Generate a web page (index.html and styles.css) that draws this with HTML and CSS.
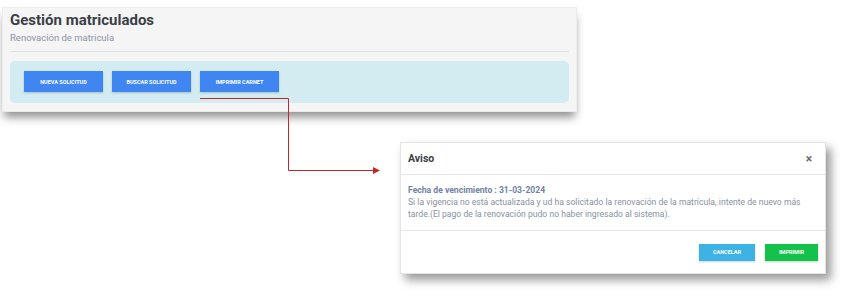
FILE: index.html
```html
<!DOCTYPE html>
<html lang="es">
<head>
    <meta charset="UTF-8">
    <meta name="viewport" content="width=device-width, initial-scale=1.0">
    <title>Gestión matriculados</title>
    <link rel="stylesheet" href="styles.css">
</head>
<body>

<div class="screen">
    <!-- Pantalla principal -->
    <div class="panel">
        <h1 class="panel-title">Gestión matriculados</h1>
        <p class="panel-subtitle">Renovación de matricula</p>
        <hr class="panel-divider">
        <div class="actions">
            <button class="btn btn-blue">Nueva solicitud</button>
            <button class="btn btn-blue">Buscar solicitud</button>
            <button class="btn btn-blue">Imprimir carnet</button>
        </div>
    </div>

    <!-- Flecha hacia el aviso -->
    <svg class="arrow" width="853" height="296" viewBox="0 0 853 296">
        <polyline points="200,98.5 288.5,98.5 288.5,170.5 374,170.5" fill="none" stroke="#c0282a" stroke-width="1"/>
        <polygon points="373,167 380,170.5 373,174" fill="#c0282a"/>
    </svg>

    <!-- Modal de aviso -->
    <div class="modal">
        <div class="modal-header">
            <span class="modal-title">Aviso</span>
            <span class="modal-close">&times;</span>
        </div>
        <div class="modal-body">
            <p class="modal-date">Fecha de vencimiento : 31-03-2024</p>
            <p class="modal-text">Si la vigencia no está actualizada y ud ha solicitado la renovación de la matrícula, intente de nuevo más tarde.(El pago de la renovación pudo no haber ingresado al sistema).</p>
        </div>
        <div class="modal-footer">
            <button class="btn btn-cyan">Cancelar</button>
            <button class="btn btn-green">Imprimir</button>
        </div>
    </div>
</div>

</body>
</html>
```

FILE: styles.css
```css
body {
    margin: 0;
    background: #ffffff;
    font-family: Roboto, "Liberation Sans", Arial, sans-serif;
}

.screen {
    position: relative;
    width: 853px;
    height: 296px;
    padding: 7px 0 0 2px;
    box-sizing: border-box;
}

.panel {
    width: 575px;
    height: 105px;
    box-sizing: border-box;
    padding: 4px 7px 0 7px;
    background-color: #f5f5f5;
    border: 1px solid #ececec;
    box-shadow: 0 7px 9px -2px rgba(0, 0, 0, 0.45);
}

.panel-title {
    margin: 0;
    font-size: 15px;
    font-weight: 700;
    color: #3b3f45;
    line-height: 17px;
}

.panel-subtitle {
    margin: 3px 0 0 0;
    font-size: 9.5px;
    color: #8b93a5;
    line-height: 12px;
}

.panel-divider {
    border: 0;
    border-top: 1px solid #e2e2e2;
    margin: 7px 0 0 0;
}

.actions {
    display: flex;
    gap: 9px;
    margin-top: 9px;
    height: 42px;
    box-sizing: border-box;
    padding: 10px 14px;
    background-color: #d3ecf2;
    border-radius: 5px;
}

.btn {
    border: 0;
    color: #ffffff;
    font-family: inherit;
    font-size: 5.5px;
    font-weight: 700;
    text-transform: uppercase;
    cursor: pointer;
    box-shadow: 0 1px 2px rgba(0, 0, 0, 0.2);
}

.btn-blue {
    width: 79px;
    height: 21px;
    background-color: #3f86f2;
}

.arrow {
    position: absolute;
    top: 0;
    left: 0;
    pointer-events: none;
}

.modal {
    width: 426px;
    height: 132px;
    margin: 30px 0 0 398px;
    box-sizing: border-box;
    background-color: #ffffff;
    border: 1px solid #e4e4e4;
    box-shadow: 5px 6px 9px rgba(0, 0, 0, 0.4);
    display: flex;
    flex-direction: column;
}

.modal-header {
    display: flex;
    justify-content: space-between;
    align-items: center;
    height: 31px;
    padding: 0 13px 0 7px;
    border-bottom: 1px solid #e6e6e6;
}

.modal-title {
    font-size: 10.5px;
    font-weight: 700;
    color: #3b3f45;
}

.modal-close {
    font-size: 12px;
    font-weight: 700;
    color: #666a70;
}

.modal-body {
    height: 56px;
    box-sizing: border-box;
    padding: 9px 21px 0 7px;
    border-bottom: 1px solid #e6e6e6;
}

.modal-date {
    margin: 0;
    font-size: 8.6px;
    font-weight: 700;
    color: #7282a0;
    line-height: 12px;
}

.modal-text {
    margin: 0;
    font-size: 8.6px;
    color: #8a91a0;
    line-height: 12px;
}

.modal-footer {
    flex: 1;
    display: flex;
    justify-content: flex-end;
    align-items: center;
    gap: 10px;
    padding: 0 7px 0 0;
}

.btn-cyan {
    width: 56px;
    height: 17px;
    background-color: #3cb3e4;
}

.btn-green {
    width: 53px;
    height: 17px;
    background-color: #14c14b;
}
```
